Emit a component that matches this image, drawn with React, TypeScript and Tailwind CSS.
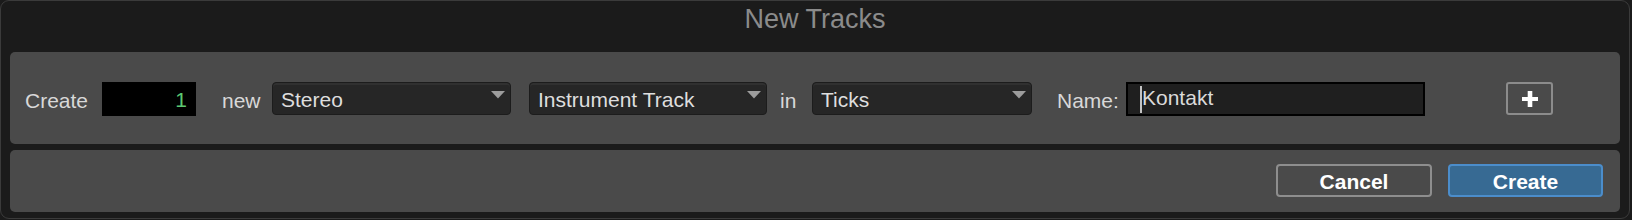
import { useState } from 'react'

const font = { fontFamily: '"Liberation Sans", Arial, sans-serif' }

function Arrow() {
  return (
    <svg width="14" height="8" viewBox="0 0 14 8" className="mt-[8px] mr-[5px] shrink-0">
      <polygon points="0,0 14,0 7,7.5" fill="#9c9c9c" />
    </svg>
  )
}

function Select({ value, width }: { value: string; width: string }) {
  return (
    <div
      className={`${width} h-[33px] flex justify-between items-start rounded-[4px] border border-[#1c1c1c] bg-[#262626] shadow-[inset_0_2px_0_#303030] box-border`}
    >
      <span className="self-center pl-[8px] pt-[3px] text-[21px] leading-[24px] text-[#dedede]">{value}</span>
      <Arrow />
    </div>
  )
}

function Label({ children, className = '' }: { children: any; className?: string }) {
  return <span className={`h-[34px] leading-[34px] pt-[2px] text-[21px] text-[#d8d8d8] ${className}`}>{children}</span>
}

export default function App() {
  const [count] = useState(1)
  const [name] = useState('Kontakt')

  return (
    <div className="w-[1632px] h-[220px] bg-[#1b1b1b] overflow-hidden" style={font}>
      <div className="w-[1630px] h-[219px] box-border border border-[#3b3b3b] rounded-[9px] bg-[#1b1b1b] flex flex-col">
        <div className="h-[51px] flex justify-center pt-[5px]">
          <span className="text-[27px] leading-[27px] text-[#8b8b8b]">New Tracks</span>
        </div>

        <div className="px-[9px] flex flex-col gap-[6px]">
          {/* main row */}
          <div className="h-[92px] rounded-[5px] bg-[#4a4a4a] flex items-start pt-[30px] pl-[15px]">
            <Label className="w-[77px]">Create</Label>
            <div className="w-[94px] h-[34px] bg-black flex items-center justify-end pr-[9px] pt-[2px] text-[21px] text-[#5cc872]">
              {count}
            </div>
            <Label className="ml-[26px] w-[50px]">new</Label>
            <Select value="Stereo" width="w-[239px]" />
            <div className="w-[18px]" />
            <Select value="Instrument Track" width="w-[238px]" />
            <Label className="ml-[13px] w-[32px]">in</Label>
            <Select value="Ticks" width="w-[220px]" />
            <Label className="ml-[25px] w-[69px]">Name:</Label>
            <div className="w-[299px] h-[34px] box-border border-2 border-black bg-[#1f1f1f] flex items-center pl-[12px]">
              <span className="w-[2px] h-[27px] bg-[#c4c4c4]" />
              <span className="text-[21px] leading-[24px] text-[#dadada] -mt-[3px]">{name}</span>
            </div>
            <button className="ml-[81px] w-[47px] h-[33px] box-border border-2 border-[#8c8c8c] rounded-[3px] flex items-center justify-center">
              <svg width="16" height="16" viewBox="0 0 16 16">
                <rect x="0" y="6" width="16" height="4" fill="#ffffff" />
                <rect x="5.7" y="0" width="4.6" height="16" fill="#ffffff" />
              </svg>
            </button>
          </div>

          {/* footer */}
          <div className="h-[62px] rounded-[5px] bg-[#4a4a4a] flex items-start justify-end pt-[14px] pr-[17px]">
            <button className="w-[156px] h-[33px] box-border border-2 border-[#8e8e8e] rounded-[4px] flex items-center justify-center pt-[2px] text-[21px] font-bold text-white">
              Cancel
            </button>
            <button className="ml-[16px] w-[155px] h-[33px] box-border border-2 border-[#4b8dcb] rounded-[4px] bg-[#376a93] flex items-center justify-center pt-[2px] text-[21px] font-bold text-white">
              Create
            </button>
          </div>
        </div>
      </div>
    </div>
  )
}
